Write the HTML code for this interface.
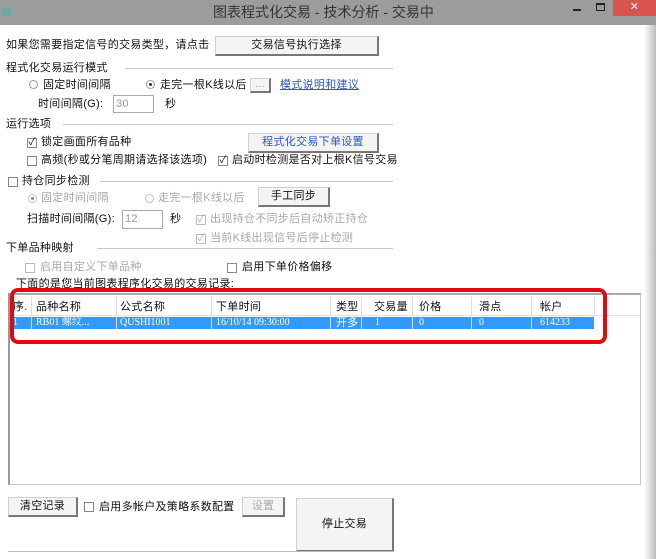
<!DOCTYPE html>
<html><head><meta charset="utf-8"><style>
*{margin:0;padding:0;box-sizing:border-box}
body{width:656px;height:559px;overflow:hidden;background:#fff;position:relative;font-family:"Liberation Sans","Noto Sans CJK SC","WenQuanYi Zen Hei",sans-serif;font-size:11px;letter-spacing:.3px;color:#111}
.a{position:absolute;white-space:nowrap;line-height:14px}
.g{color:#a8a8a8}
.btn{position:absolute;background:#f4f4f4;border:1px solid #d0d0d0;border-right:2px solid #777;border-bottom:2px solid #777;text-align:center;font-size:11px}
.ln{position:absolute;height:1px;background:#c8c8c8}
.cb{position:absolute;width:10px;height:10px;border:1px solid #888;background:#fff;font-size:10px;line-height:8px;text-align:center;letter-spacing:0}
.rd{position:absolute;width:9px;height:9px;border:1px solid #999;border-radius:50%;background:#fff}
.rd.on::after{content:"";position:absolute;left:2px;top:2px;width:3px;height:3px;border-radius:50%;background:#333}
.inp{position:absolute;border:1px solid #aaa;background:#fff;color:#999;font-size:11px;padding-left:2px;line-height:16px}
.w{color:#fff;font-size:10px;font-family:'Liberation Serif','Noto Serif CJK SC',serif;letter-spacing:0}
</style></head><body>
<div style="position:absolute;left:0;top:0;width:656px;height:25px;background:#9c9c9c"></div>
<div style="position:absolute;left:2px;top:8px;width:9px;height:8px;background:#6fa8a0"></div>
<div class="a" style="left:213px;top:5px;font-size:14px;color:#333;letter-spacing:0">图表程式化交易 - 技术分析 - 交易中</div>
<div style="position:absolute;left:573px;top:9px;width:8px;height:2px;background:#222"></div>
<div style="position:absolute;left:596px;top:3px;width:9px;height:8px;border:1px solid #222;border-top-width:2px"></div>
<div style="position:absolute;left:613px;top:0;width:43px;height:16px;background:#d9534f;color:#fff;text-align:center;font-size:11px;line-height:15px">✕</div>
<div style="position:absolute;left:644px;top:25px;width:12px;height:534px;background:linear-gradient(90deg,#fff,#bbb)"></div>

<div class="a" style="left:6px;top:38px">如果您需要指定信号的交易类型，请点击</div>
<div class="btn" style="left:215px;top:36px;width:164px;height:20px;line-height:17px">交易信号执行选择</div>
<div class="a" style="left:6px;top:61px">程式化交易运行模式</div><div class="ln" style="left:125px;top:68px;width:268px"></div>
<div class="rd" style="left:29px;top:80px"></div><div class="a" style="left:43px;top:78px">固定时间间隔</div>
<div class="rd on" style="left:146px;top:80px"></div><div class="a" style="left:160px;top:78px">走完一根K线以后</div>
<div class="btn" style="left:250px;top:78px;width:21px;height:15px;line-height:11px;color:#888;font-size:10px">...</div>
<div class="a" style="left:280px;top:78px;color:#2a56c6;text-decoration:underline">模式说明和建议</div>
<div class="a" style="left:38px;top:97px">时间间隔(G):</div><div class="inp" style="left:113px;top:95px;width:41px;height:18px">30</div><div class="a" style="left:165px;top:97px">秒</div>
<div class="a" style="left:6px;top:117px">运行选项</div><div class="ln" style="left:63px;top:124px;width:330px"></div>
<div class="cb" style="left:27px;top:138px">✓</div><div class="a" style="left:41px;top:135px">锁定画面所有品种</div>
<div class="btn" style="left:248px;top:133px;width:131px;height:20px;line-height:17px;color:#2a56c6">程式化交易下单设置</div>
<div class="cb" style="left:27px;top:156px"></div><div class="a" style="left:41px;top:153px">高频(秒或分笔周期请选择该选项)</div>
<div class="cb" style="left:218px;top:156px">✓</div><div class="a" style="left:232px;top:153px">启动时检测是否对上根K信号交易</div>
<div class="cb" style="left:8px;top:177px"></div><div class="a" style="left:22px;top:174px">持仓同步检测</div><div class="ln" style="left:100px;top:181px;width:293px"></div>
<div class="rd on" style="left:28px;top:194px;opacity:.6"></div><div class="a g" style="left:41px;top:191px">固定时间间隔</div>
<div class="rd" style="left:145px;top:194px;opacity:.6"></div><div class="a g" style="left:158px;top:191px">走完一根K线以后</div>
<div class="btn" style="left:258px;top:187px;width:72px;height:20px;line-height:17px">手工同步</div>
<div class="a" style="left:27px;top:212px">扫描时间间隔(G):</div><div class="inp" style="left:122px;top:210px;width:41px;height:19px">12</div><div class="a" style="left:170px;top:212px">秒</div>
<div class="cb" style="left:196px;top:215px;color:#aaa;border-color:#bbb">✓</div><div class="a g" style="left:210px;top:212px">出现持仓不同步后自动矫正持仓</div>
<div class="cb" style="left:196px;top:234px;color:#aaa;border-color:#bbb">✓</div><div class="a g" style="left:210px;top:231px">当前K线出现信号后停止检测</div>
<div class="a" style="left:6px;top:241px">下单品种映射</div><div class="ln" style="left:97px;top:248px;width:296px"></div>
<div class="cb" style="left:25px;top:263px;border-color:#bbb"></div><div class="a g" style="left:40px;top:260px">启用自定义下单品种</div>
<div class="cb" style="left:227px;top:263px"></div><div class="a" style="left:242px;top:260px">启用下单价格偏移</div>
<div class="a" style="left:16px;top:277px">下面的是您当前图表程序化交易的交易记录:</div>

<div style="position:absolute;left:8px;top:293px;width:633px;height:192px;border:1px solid #c8c8c8;border-top:2px solid #aaa;border-left:2px solid #999"></div>
<div style="position:absolute;left:10px;top:296px;width:630px;height:20px;border-bottom:1px solid #e0e0e0"></div>
<div style="position:absolute;left:10px;top:317px;width:584px;height:12px;background:#3399ff"></div>
<div class="a" style="left:13px;top:300px">序.</div>
<div class="a" style="left:36px;top:300px">品种名称</div>
<div class="a" style="left:120px;top:300px">公式名称</div>
<div class="a" style="left:216px;top:300px">下单时间</div>
<div class="a" style="left:336px;top:300px">类型</div>
<div class="a" style="left:374px;top:300px">交易量</div>
<div class="a" style="left:419px;top:300px">价格</div>
<div class="a" style="left:479px;top:300px">滑点</div>
<div class="a" style="left:540px;top:300px">帐户</div>
<div style="position:absolute;top:297px;left:31px;width:1px;height:18px;background:#ddd;box-shadow:85px 0 #ddd,180px 0 #ddd,299px 0 #ddd,330px 0 #ddd,381px 0 #ddd,440px 0 #ddd,500px 0 #ddd,563px 0 #ddd"></div>
<div style="position:absolute;top:317px;left:31px;width:1px;height:12px;background:#cfe6ff;box-shadow:85px 0 #cfe6ff,180px 0 #cfe6ff,299px 0 #cfe6ff,330px 0 #cfe6ff,381px 0 #cfe6ff,440px 0 #cfe6ff,500px 0 #cfe6ff"></div>
<div class="a w" style="top:316px;left:13px">1</div>
<div class="a w" style="top:316px;left:36px">RB01 螺纹...</div>
<div class="a w" style="top:316px;left:120px">QUSHI1001</div>
<div class="a w" style="top:316px;left:216px">16/10/14 09:30:00</div>
<div class="a" style="top:316px;left:336px;color:#fff;font-size:11px">开多</div>
<div class="a w" style="top:316px;left:375px">1</div>
<div class="a w" style="top:316px;left:419px">0</div>
<div class="a w" style="top:316px;left:479px">0</div>
<div class="a w" style="top:316px;left:540px">614233</div>
<div style="position:absolute;left:10px;top:288px;width:597px;height:56px;border:4px solid #e8070a;border-radius:8px"></div>

<div class="btn" style="left:8px;top:497px;width:70px;height:20px;line-height:17px">清空记录</div>
<div class="cb" style="left:84px;top:502px"></div><div class="a" style="left:99px;top:500px">启用多帐户及策略系数配置</div>
<div class="btn" style="left:242px;top:497px;width:43px;height:20px;line-height:17px;color:#aaa">设置</div>
<div class="btn" style="left:296px;top:498px;width:98px;height:54px;line-height:50px">停止交易</div>
<div class="ln" style="left:8px;top:551px;width:386px;background:#bbb"></div>
</body></html>
